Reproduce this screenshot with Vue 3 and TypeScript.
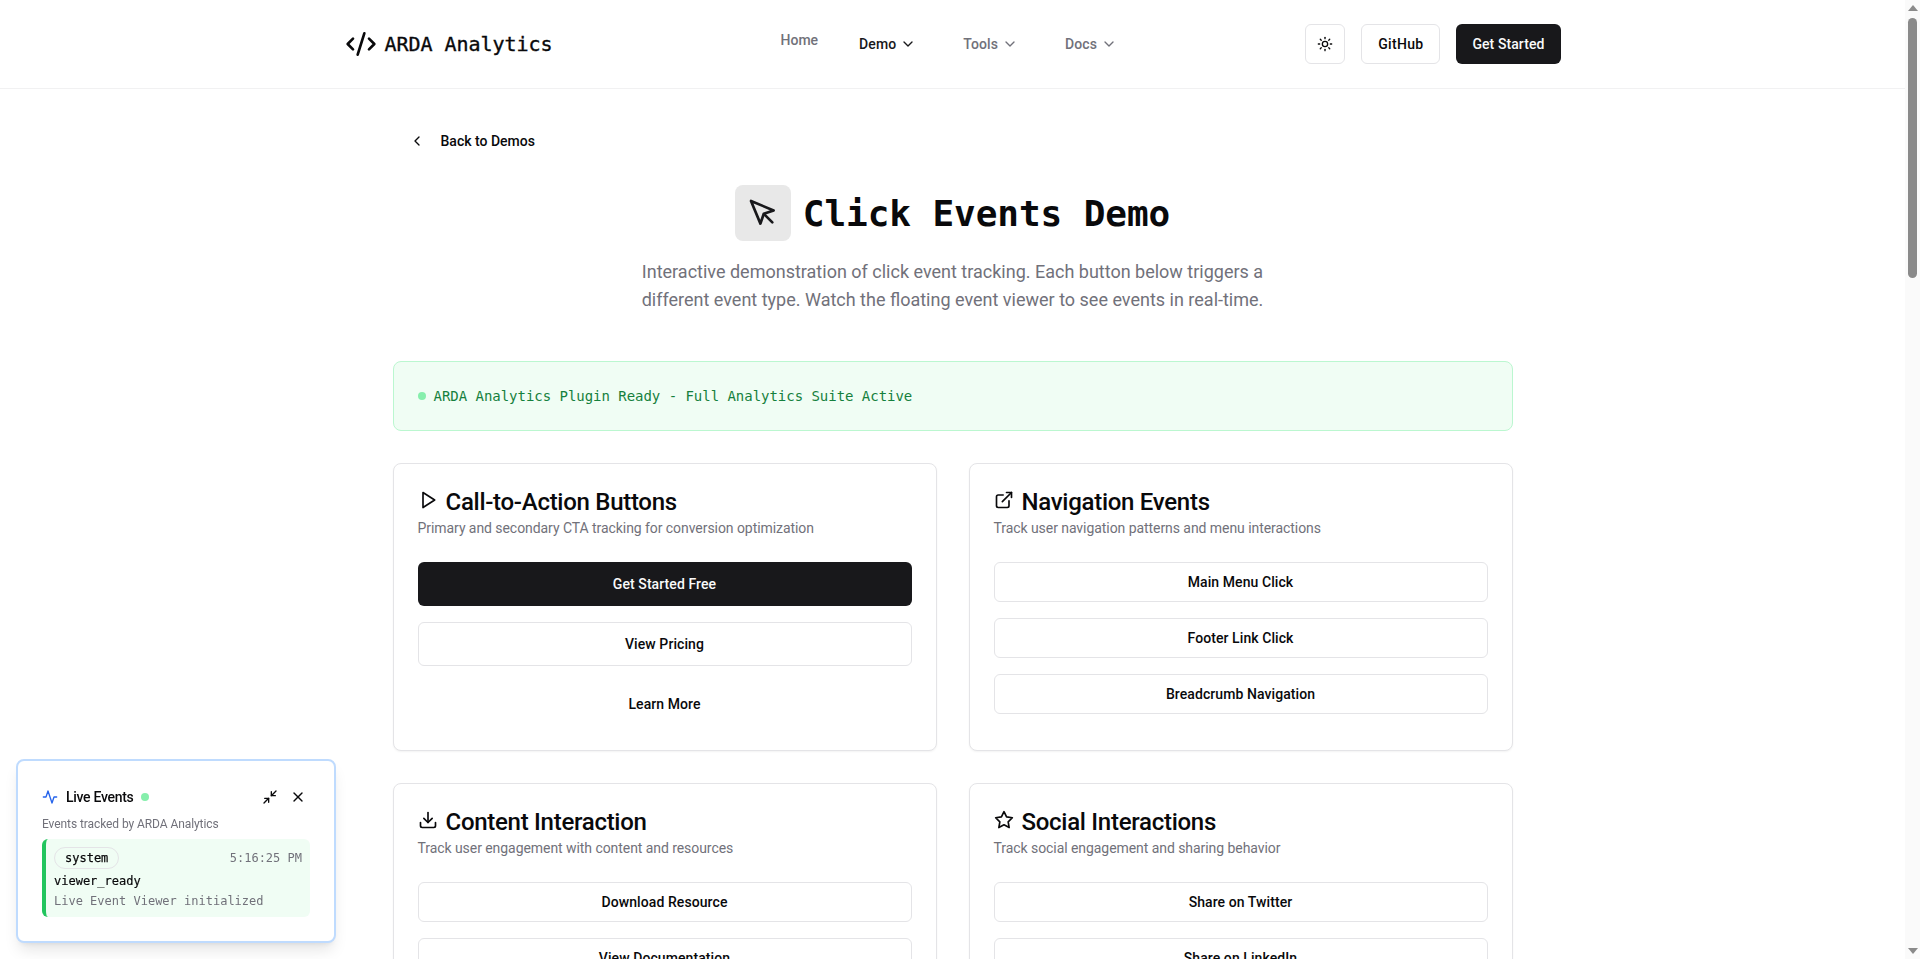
<script setup lang="ts">
const icons: Record<string, string[]> = {
  code: ['m18 16 4-4-4-4', 'm6 8-4 4 4 4', 'm14.5 4-5 16'],
  down: ['m6 9 6 6 6-6'],
  left: ['m15 18-6-6 6-6'],
  sun: ['M12 8a4 4 0 1 0 0 8 4 4 0 0 0 0-8z', 'M12 2v2', 'M12 20v2', 'm4.93 4.93 1.41 1.41', 'm17.66 17.66 1.41 1.41', 'M2 12h2', 'M20 12h2', 'm6.34 17.66-1.41 1.41', 'm19.07 4.93-1.41 1.41'],
  pointer: ['m3 3 7.07 16.97 2.51-7.39 7.39-2.51L3 3z', 'm13 13 6 6'],
  play: ['M6 3l14 9-14 9V3z'],
  link: ['M15 3h6v6', 'M10 14 21 3', 'M18 13v6a2 2 0 0 1-2 2H5a2 2 0 0 1-2-2V8a2 2 0 0 1 2-2h6'],
  download: ['M21 15v4a2 2 0 0 1-2 2H5a2 2 0 0 1-2-2v-4', 'M7 10l5 5 5-5', 'M12 15V3'],
  star: ['M12 2l3.09 6.26L22 9.27l-5 4.87 1.18 6.88L12 17.77l-6.18 3.25L7 14.14 2 9.27l6.91-1.01L12 2z'],
  activity: ['M22 12h-4l-3 9L9 3l-3 9H2'],
  shrink: ['M4 14h6v6', 'M20 10h-6V4', 'M14 10l7-7', 'M3 21l7-7'],
  close: ['M18 6 6 18', 'm6 6 12 12'],
}

const menus = [
  { label: 'Demo', active: true },
  { label: 'Tools', active: false },
  { label: 'Docs', active: false },
]

interface Action { label: string; kind: 'primary' | 'outline' | 'ghost' }
interface Card { icon: string; title: string; text: string; large: boolean; actions: Action[] }

const outline = (label: string): Action => ({ label, kind: 'outline' })

const cards: Card[] = [
  {
    icon: 'play', title: 'Call-to-Action Buttons', text: 'Primary and secondary CTA tracking for conversion optimization', large: true,
    actions: [{ label: 'Get Started Free', kind: 'primary' }, outline('View Pricing'), { label: 'Learn More', kind: 'ghost' }],
  },
  {
    icon: 'link', title: 'Navigation Events', text: 'Track user navigation patterns and menu interactions', large: false,
    actions: [outline('Main Menu Click'), outline('Footer Link Click'), outline('Breadcrumb Navigation')],
  },
  {
    icon: 'download', title: 'Content Interaction', text: 'Track user engagement with content and resources', large: false,
    actions: [outline('Download Resource'), outline('View Documentation'), outline('Watch Video')],
  },
  {
    icon: 'star', title: 'Social Interactions', text: 'Track social engagement and sharing behavior', large: false,
    actions: [outline('Share on Twitter'), outline('Share on LinkedIn'), outline('Like Content')],
  },
]
</script>

<template>
  <div class="shell">
    <div class="page">
      <header class="topbar">
        <div class="topbar-inner">
          <a class="brand">
            <svg class="ic brand-ic" viewBox="0 0 24 24"><path v-for="d in icons.code" :key="d" :d="d" /></svg>
            <span>ARDA Analytics</span>
          </a>
          <nav class="nav">
            <a class="home">Home</a>
            <button v-for="m in menus" :key="m.label" class="menu" :class="{ active: m.active }">
              {{ m.label }}
              <svg class="ic ic16 chev" viewBox="0 0 24 24"><path v-for="d in icons.down" :key="d" :d="d" /></svg>
            </button>
          </nav>
          <div class="top-actions">
            <button class="btn outline square">
              <svg class="ic ic16" viewBox="0 0 24 24"><path v-for="d in icons.sun" :key="d" :d="d" /></svg>
            </button>
            <button class="btn outline pad github">GitHub</button>
            <button class="btn primary pad">Get Started</button>
          </div>
        </div>
      </header>

      <main class="main">
        <button class="back">
          <svg class="ic ic16" viewBox="0 0 24 24"><path v-for="d in icons.left" :key="d" :d="d" /></svg>
          Back to Demos
        </button>

        <section class="hero">
          <div class="hero-title">
            <span class="hero-icon">
              <svg class="ic hero-svg" viewBox="0 0 24 24"><path v-for="d in icons.pointer" :key="d" :d="d" /></svg>
            </span>
            <h1>Click Events Demo</h1>
          </div>
          <p>Interactive demonstration of click event tracking. Each button below triggers a different event type. Watch the floating event viewer to see events in real-time.</p>
        </section>

        <div class="ready">
          <span class="dot"></span>
          <span>ARDA Analytics Plugin Ready - Full Analytics Suite Active</span>
        </div>

        <div class="grid">
          <article v-for="c in cards" :key="c.title" class="card">
            <h2>
              <svg class="ic ic20" viewBox="0 0 24 24"><path v-for="d in icons[c.icon]" :key="d" :d="d" /></svg>
              <span class="card-title">{{ c.title }}</span>
            </h2>
            <p class="card-text">{{ c.text }}</p>
            <div class="stack">
              <button v-for="a in c.actions" :key="a.label" class="btn" :class="[a.kind, { lg: c.large }]">{{ a.label }}</button>
            </div>
          </article>
        </div>
      </main>
    </div>

    <aside class="scrollbar">
      <span class="arrow up"></span>
      <span class="thumb"></span>
      <span class="arrow dn"></span>
    </aside>

    <section class="viewer">
      <div class="viewer-head">
        <svg class="ic ic16 pulse-ic" viewBox="0 0 24 24"><path v-for="d in icons.activity" :key="d" :d="d" /></svg>
        <span class="viewer-title">Live Events</span>
        <span class="dot"></span>
        <span class="viewer-tools">
          <svg class="ic ic16" viewBox="0 0 24 24"><path v-for="d in icons.shrink" :key="d" :d="d" /></svg>
          <svg class="ic ic16" viewBox="0 0 24 24"><path v-for="d in icons.close" :key="d" :d="d" /></svg>
        </span>
      </div>
      <p class="viewer-sub">Events tracked by ARDA Analytics</p>
      <div class="event">
        <div class="event-top">
          <span class="badge">system</span>
          <span class="time">5:16:25 PM</span>
        </div>
        <div class="event-name">viewer_ready</div>
        <div class="event-msg">Live Event Viewer initialized</div>
      </div>
    </section>
  </div>
</template>

<style>
html, body { margin: 0; height: 100%; overflow: hidden; background: #fff; }
</style>

<style scoped>
.shell {
  display: flex;
  height: 959px;
  overflow: hidden;
  font-family: Roboto, "Liberation Sans", sans-serif;
  color: #09090b;
  background: #fff;
}
.page { flex: 1; min-width: 0; height: 959px; overflow: hidden; }
button { font-family: inherit; cursor: pointer; }
.ic { fill: none; stroke: currentColor; stroke-width: 2; stroke-linecap: round; stroke-linejoin: round; flex: none; display: block; }
.ic16 { width: 16px; height: 16px; }
.ic20 { width: 20px; height: 20px; }

.topbar { height: 88px; border-bottom: 1px solid #f1f1f2; box-sizing: content-box; }
.topbar-inner { width: 1216px; height: 88px; margin: 0 auto; display: flex; align-items: center; }
.brand { display: flex; align-items: center; gap: 8px; font: 500 20px/28px "DejaVu Sans Mono", monospace; color: #09090b; letter-spacing: -0.04px; -webkit-text-stroke: 0.35px #09090b; }
.brand-ic { width: 32px; height: 32px; }
.nav { display: flex; align-items: center; gap: 15px; margin-left: 228px; }
.home { font-size: 14px; font-weight: 500; line-height: 20px; color: #71717a; margin: 0 10px 8px 0; }
.menu { height: 40px; padding: 0 16px; display: flex; align-items: center; gap: 4px; border: 0; background: none; font-size: 14px; font-weight: 500; letter-spacing: 0.1px; color: #71717a; }
.menu.active { color: #18181b; }
.top-actions { margin-left: auto; display: flex; gap: 16px; }

.btn { height: 40px; border-radius: 6px; font-size: 14px; font-weight: 500; letter-spacing: 0.08px; color: #09090b; display: flex; align-items: center; justify-content: center; width: 100%; box-sizing: border-box; }
.btn.lg { height: 44px; }
.primary { background: #18181b; color: #fafafa; border: 0; }
.outline { background: #fff; border: 1px solid #e4e4e7; }
.ghost { background: none; border: 0; }
.square { width: 40px; padding: 0; }
.pad { width: auto; padding: 0 16px; }
.github { letter-spacing: 0.3px; }

.main { width: 1120px; margin: 0 auto; padding-top: 32px; }
.back { height: 40px; padding: 0 16px; display: flex; align-items: center; gap: 16px; background: none; border: 0; font-size: 14px; font-weight: 500; color: #09090b; }

.hero { text-align: center; margin-top: 24px; }
.hero-title { display: flex; justify-content: center; align-items: center; gap: 12px; }
.hero-icon { width: 56px; height: 56px; border-radius: 8px; background: #e8e8e8; display: flex; align-items: center; justify-content: center; color: #18181b; }
.hero-svg { width: 32px; height: 32px; }
.hero h1 { margin: 2px 0 0; font: 700 36px/40px "DejaVu Sans Mono", monospace; color: #09090b; letter-spacing: -0.07px; }
.hero p { width: 672px; margin: 17px auto 0; font-size: 18px; line-height: 28px; color: #71717a; }

.ready { margin-top: 47px; height: 70px; box-sizing: border-box; border: 1px solid #bbf7d0; border-radius: 8px; background: #f0fdf4; padding: 0 24px; display: flex; align-items: center; gap: 8px; font: 400 14px/20px "DejaVu Sans Mono", monospace; color: #15803d; letter-spacing: -0.03px; }
.dot { width: 8px; height: 8px; border-radius: 50%; background: #86efac; flex: none; }

.grid { margin-top: 32px; display: grid; grid-template-columns: 1fr 1fr; gap: 32px; }
.card { border: 1px solid #e4e4e7; border-radius: 8px; padding: 24px; background: #fff; box-shadow: 0 1px 2px rgba(0, 0, 0, 0.05); height: 288px; box-sizing: border-box; }
.card h2 { margin: 0; display: flex; align-items: center; gap: 8px; font-size: 24px; font-weight: 500; line-height: 24px; letter-spacing: -0.28px; }
.card-title { position: relative; top: 2px; }
.card-text { margin: 6px 0 0; font-size: 14px; line-height: 20px; letter-spacing: -0.06px; color: #71717a; }
.stack { margin-top: 24px; display: flex; flex-direction: column; gap: 16px; }

.scrollbar { width: 15px; height: 959px; flex: none; background: #fafafa; display: flex; flex-direction: column; align-items: center; }
.arrow { width: 0; height: 0; border-left: 5px solid transparent; border-right: 5px solid transparent; flex: none; }
.arrow.up { border-bottom: 6px solid #8a8a8a; margin-top: 5px; }
.arrow.dn { border-top: 6px solid #8a8a8a; margin-top: auto; margin-bottom: 5px; }
.thumb { width: 9px; height: 260px; margin-top: 7px; border-radius: 5px; background: #8a8a8a; flex: none; }

.viewer { position: fixed; left: 16px; bottom: 16px; width: 320px; height: 184px; box-sizing: border-box; border: 2px solid #bfdbfe; border-radius: 8px; background: #fff; padding: 24px; box-shadow: 0 10px 15px -3px rgba(0, 0, 0, 0.1), 0 4px 6px -4px rgba(0, 0, 0, 0.1); }
.viewer-head { display: flex; align-items: center; height: 20px; margin-top: 2px; }
.pulse-ic { color: #2563eb; margin-right: 8px; }
.viewer-title { font-size: 14px; font-weight: 500; line-height: 20px; letter-spacing: -0.3px; margin-right: 8px; color: #09090b; }
.viewer-tools { margin-left: auto; display: flex; gap: 12px; margin-right: 4px; color: #09090b; }
.viewer-sub { margin: 9px 0 0; font-size: 12px; line-height: 16px; letter-spacing: -0.08px; color: #71717a; }
.event { margin-top: 7px; height: 78px; box-sizing: border-box; border-left: 4px solid #22c55e; border-radius: 6px; background: #f0fdf4; padding: 8px; font: 400 12px/16px "DejaVu Sans Mono", monospace; }
.event-top { display: flex; justify-content: space-between; align-items: center; height: 22px; }
.badge { height: 22px; box-sizing: border-box; border: 1px solid #e4e4e7; border-radius: 11px; padding: 0 10px; line-height: 20px; color: #09090b; -webkit-text-stroke: 0.25px #09090b; }
.time { color: #71717a; }
.event-name { margin-top: 4px; color: #09090b; -webkit-text-stroke: 0.2px #09090b; }
.event-msg { margin-top: 4px; color: #71717a; }
</style>
